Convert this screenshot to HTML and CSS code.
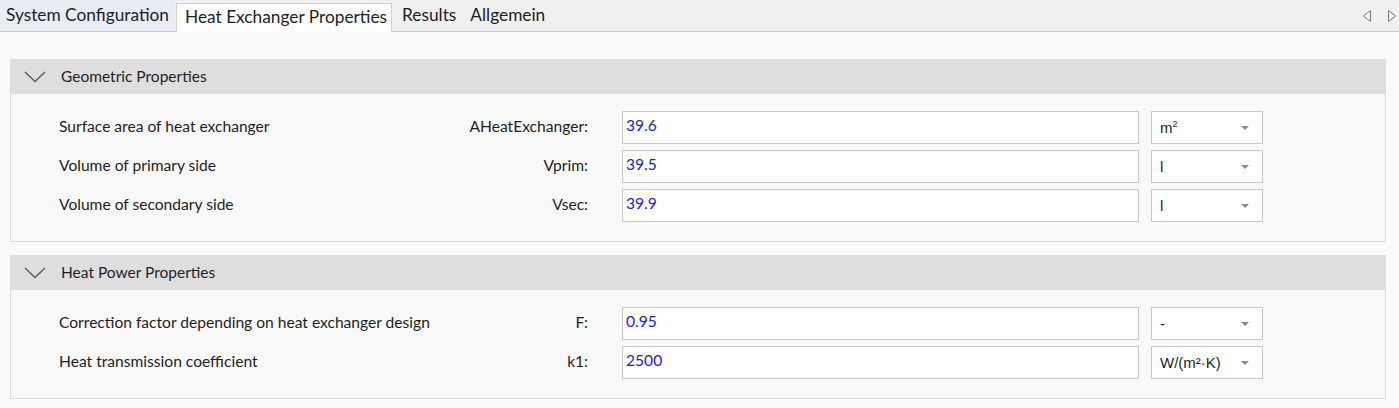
FILE: index.html
```html
<!DOCTYPE html>
<html lang="en">
<head>
    <meta charset="UTF-8">
    <title>Heat Exchanger Properties</title>
    <link rel="stylesheet" href="styles.css">
</head>
<body>

    <!-- Tab strip -->
    <div class="tab-strip">
        <div class="tab hover">System Configuration</div>
        <div class="tab active">Heat Exchanger Properties</div>
        <div class="tab">Results</div>
        <div class="tab">Allgemein</div>
        <div class="tab-scroll">
            <svg width="10" height="14" viewBox="0 0 10 14"><path d="M8.5 1.5 L1.5 7 L8.5 12.5 Z" fill="none" stroke="#7a7a7a" stroke-width="1"/></svg>
            <svg width="10" height="14" viewBox="0 0 10 14"><path d="M1.5 1.5 L8.5 7 L1.5 12.5 Z" fill="none" stroke="#7a7a7a" stroke-width="1"/></svg>
        </div>
    </div>

    <div class="content">

        <!-- Geometric properties -->
        <div class="group">
            <div class="group-header">
                <svg class="chevron" width="22" height="12" viewBox="0 0 22 12"><path d="M1 1 L11 10.5 L21 1" fill="none" stroke="#5a5a5a" stroke-width="1.4"/></svg>
                <span>Geometric Properties</span>
            </div>
            <div class="group-body">
                <div class="row">
                    <div class="label">Surface area of heat exchanger</div>
                    <div class="symbol">AHeatExchanger:</div>
                    <div class="value">39.6</div>
                    <div class="unit"><span>m<sup>2</sup></span><i class="caret"></i></div>
                </div>
                <div class="row">
                    <div class="label">Volume of primary side</div>
                    <div class="symbol">Vprim:</div>
                    <div class="value">39.5</div>
                    <div class="unit"><span>l</span><i class="caret"></i></div>
                </div>
                <div class="row">
                    <div class="label">Volume of secondary side</div>
                    <div class="symbol">Vsec:</div>
                    <div class="value">39.9</div>
                    <div class="unit"><span>l</span><i class="caret"></i></div>
                </div>
            </div>
        </div>

        <!-- Heat power properties -->
        <div class="group">
            <div class="group-header">
                <svg class="chevron" width="22" height="12" viewBox="0 0 22 12"><path d="M1 1 L11 10.5 L21 1" fill="none" stroke="#5a5a5a" stroke-width="1.4"/></svg>
                <span>Heat Power Properties</span>
            </div>
            <div class="group-body">
                <div class="row">
                    <div class="label">Correction factor depending on heat exchanger design</div>
                    <div class="symbol">F:</div>
                    <div class="value">0.95</div>
                    <div class="unit"><span>-</span><i class="caret"></i></div>
                </div>
                <div class="row">
                    <div class="label">Heat transmission coefficient</div>
                    <div class="symbol">k1:</div>
                    <div class="value">2500</div>
                    <div class="unit"><span>W/(m²·K)</span><i class="caret"></i></div>
                </div>
            </div>
        </div>

    </div>

</body>
</html>
```

FILE: styles.css
```css
body {
    margin: 0;
    font-family: "Segoe UI", Lato, "Open Sans", sans-serif;
    color: #1e1e1e;
    background-color: #fafafa;
    height: 408px;
    overflow: hidden;
}
/* Tab strip */
.tab-strip {
    display: flex;
    align-items: flex-end;
    height: 31px;
    background-color: #f0f0f0;
    border-bottom: 1px solid #c9c9c9;
}
.tab {
    font-size: 17.3px;
    height: 31px;
    line-height: 29px;
    padding: 0 7px;
    box-sizing: border-box;
    white-space: nowrap;
}
.tab.hover {
    background-color: #e8edf4;
    padding: 0 6px;
    margin-right: 1px;
}
.tab.active {
    background-color: #fff;
    border: 1px solid #d3d3d3;
    border-bottom: none;
    height: 29px;
    line-height: 26px;
    margin-bottom: -1px;
    padding: 0 4px 0 8px;
    margin-right: 3px;
}
.tab-scroll {
    margin-left: auto;
    display: flex;
    gap: 15px;
    align-self: center;
    padding-right: 2px;
}
/* Content */
.content {
    padding: 27px 13px 0 10px;
}
.group {
    margin-bottom: 13px;
}
.group-header {
    display: flex;
    align-items: center;
    height: 35px;
    background-color: #dedede;
    font-size: 15.5px;
    padding-bottom: 1px;
    box-sizing: border-box;
}
.chevron {
    margin: 1px 15px 0 14px;
}
.group-body {
    background-color: #f9f9f9;
    border: 1px solid #dcdcdc;
    border-top: none;
    padding: 17px 0 19px 48px;
    display: flex;
    flex-direction: column;
    gap: 6px;
}
.row {
    display: flex;
    align-items: center;
    height: 33px;
    font-size: 15.6px;
}
.label {
    width: 400px;
    white-space: nowrap;
    padding-bottom: 3px;
}
.symbol {
    width: 129px;
    text-align: right;
    padding-bottom: 3px;
}
.value {
    margin-left: 34px;
    width: 517px;
    height: 33px;
    box-sizing: border-box;
    border: 1px solid #c8c8c8;
    background-color: #fff;
    color: #1c1cc8;
    padding: 0 3px;
    line-height: 27px;
}
.unit {
    margin-left: 12px;
    width: 112px;
    height: 33px;
    box-sizing: border-box;
    border: 1px solid #c8c8c8;
    background-color: #fff;
    display: flex;
    align-items: center;
    justify-content: space-between;
    padding: 0 13px 0 8px;
    font-family: "Liberation Sans", Arial, sans-serif;
    font-size: 15px;
}
.unit sup {
    font-size: 9px;
    vertical-align: 6px;
}
.caret {
    width: 0;
    height: 0;
    border-left: 4px solid transparent;
    border-right: 4px solid transparent;
    border-top: 4px solid #8a8a8a;
}
```
